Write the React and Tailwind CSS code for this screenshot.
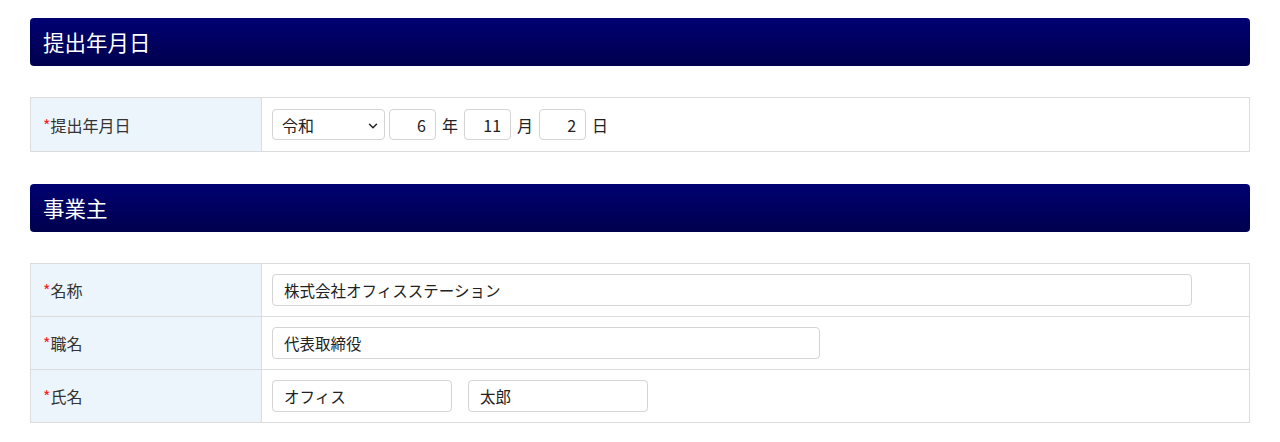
import React from 'react';
import { ChevronDown } from 'lucide-react';

const font = { fontFamily: '"Noto Sans CJK JP", "Noto Sans", sans-serif' };

const SectionHeader = ({ title }) => (
  <div className="h-12 rounded bg-gradient-to-b from-[#000072] to-[#00004e] flex items-center px-[13px] text-white text-[21.5px]">
    {title}
  </div>
);

const Row = ({ label, children, last, tall }) => (
  <div className={`flex ${last ? '' : 'border-b border-[#dcdcdc]'}`}>
    <div className="w-[231px] shrink-0 bg-[#edf5fc] border-r border-[#dcdcdc] flex items-center pl-3 text-[16px] text-[#333]">
      <span className="text-[#ff2020]">*</span>
      {label}
    </div>
    <div className={`flex-1 flex items-center pl-[10px] ${tall ? 'py-[11px]' : 'py-[10px]'}`}>{children}</div>
  </div>
);

const TextBox = ({ value, className = '' }) => (
  <input
    readOnly
    value={value}
    className={`h-[32px] border border-[#d4d4d4] rounded px-[11px] text-[15.5px] text-[#222] outline-none ${className}`}
    style={font}
  />
);

const NumBox = ({ value }) => (
  <input
    readOnly
    value={value}
    className="h-[31px] w-[47px] border border-[#d4d4d4] rounded px-[9px] text-[16px] text-right text-[#222] outline-none"
    style={font}
  />
);

export default function App() {
  return (
    <div className="bg-white min-h-screen px-[30px] pt-[18px] text-[#333]" style={font}>
      <SectionHeader title="提出年月日" />

      <div className="mt-[31px] border border-[#dcdcdc]">
        <Row label="提出年月日" last tall>
          <div className="flex items-center text-[16px] text-[#222]">
            <div className="relative w-[113px] h-[31px] border border-[#d4d4d4] rounded flex items-center pl-[9px]">
              令和
              <ChevronDown className="absolute right-[4px] top-[9px] w-[14px] h-[14px]" strokeWidth={2.5} />
            </div>
            <div className="ml-[4px]"><NumBox value="6" /></div>
            <span className="mx-[6px]">年</span>
            <NumBox value="11" />
            <span className="mx-[6px]">月</span>
            <NumBox value="2" />
            <span className="mx-[6px]">日</span>
          </div>
        </Row>
      </div>

      <div className="mt-8">
        <SectionHeader title="事業主" />
      </div>

      <div className="mt-[31px] border border-[#dcdcdc]">
        <Row label="名称">
          <TextBox value="株式会社オフィスステーション" className="w-[920px]" />
        </Row>
        <Row label="職名">
          <TextBox value="代表取締役" className="w-[548px]" />
        </Row>
        <Row label="氏名" last>
          <div className="flex gap-4">
            <TextBox value="オフィス" className="w-[180px]" />
            <TextBox value="太郎" className="w-[180px]" />
          </div>
        </Row>
      </div>
    </div>
  );
}
